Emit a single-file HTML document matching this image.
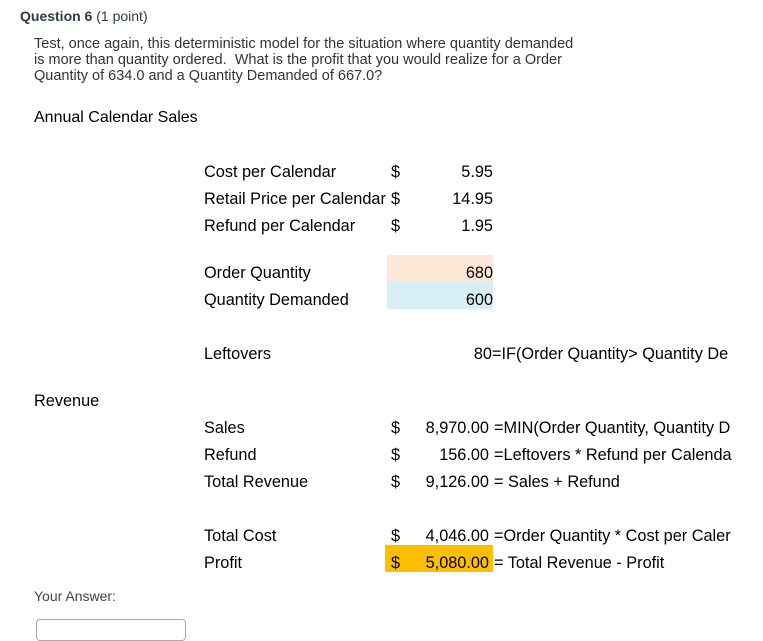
<!DOCTYPE html>
<html><head><style>
body{margin:0;width:763px;height:631px;background:#fff;position:relative;overflow:hidden;font-family:"Liberation Sans",sans-serif;}
.a{position:absolute;white-space:nowrap;line-height:18px;height:18px;font-size:16.3px;color:#000;}
.r{text-align:right;}
.q{position:absolute;font-size:14px;color:#2d3b45;white-space:nowrap;}
.bg{position:absolute;}
</style></head><body>
<div class="q" style="left:20px;top:8px;"><b>Question 6</b> (1 point)</div>
<div class="q" style="left:34px;top:36px;line-height:16px;color:#333;font-size:14.5px;">Test, once again, this deterministic model for the situation where quantity demanded<br>is more than quantity ordered.&nbsp; What is the profit that you would realize for a Order<br>Quantity of 634.0 and a Quantity Demanded of 667.0?</div>
<div class="a" style="left:34px;top:109px;font-size:16px;">Annual Calendar Sales</div>

<div class="bg" style="left:387px;top:255px;width:106px;height:27px;background:#fde7d7;"></div>
<div class="bg" style="left:387px;top:282px;width:106px;height:27px;background:#d6eef4;"></div>
<div class="bg" style="left:385px;top:545px;width:108px;height:27px;background:#fbbf00;"></div>

<div class="a" style="left:204px;top:163px;">Cost per Calendar</div>
<div class="a" style="left:391px;top:163px;">$</div>
<div class="a r" style="left:400px;width:93px;top:163px;">5.95</div>
<div class="a" style="left:204px;top:190px;">Retail Price per Calendar</div>
<div class="a" style="left:391px;top:190px;">$</div>
<div class="a r" style="left:400px;width:93px;top:190px;">14.95</div>
<div class="a" style="left:204px;top:217px;">Refund per Calendar</div>
<div class="a" style="left:391px;top:217px;">$</div>
<div class="a r" style="left:400px;width:93px;top:217px;">1.95</div>

<div class="a" style="left:204px;top:264px;">Order Quantity</div>
<div class="a r" style="left:400px;width:93px;top:264px;">680</div>
<div class="a" style="left:204px;top:291px;">Quantity Demanded</div>
<div class="a r" style="left:400px;width:93px;top:291px;">600</div>

<div class="a" style="left:204px;top:345px;">Leftovers</div>
<div class="a r" style="left:400px;width:92px;top:345px;">80</div>
<div class="a" style="left:492px;top:345px;">=IF(Order Quantity&gt; Quantity De</div>

<div class="a" style="left:34px;top:392px;">Revenue</div>

<div class="a" style="left:204px;top:419px;">Sales</div>
<div class="a" style="left:391px;top:419px;">$</div>
<div class="a r" style="left:400px;width:89px;top:419px;">8,970.00</div>
<div class="a" style="left:494px;top:419px;">=MIN(Order Quantity, Quantity D</div>
<div class="a" style="left:204px;top:446px;">Refund</div>
<div class="a" style="left:391px;top:446px;">$</div>
<div class="a r" style="left:400px;width:89px;top:446px;">156.00</div>
<div class="a" style="left:494px;top:446px;">=Leftovers * Refund per Calenda</div>
<div class="a" style="left:204px;top:473px;">Total Revenue</div>
<div class="a" style="left:391px;top:473px;">$</div>
<div class="a r" style="left:400px;width:89px;top:473px;">9,126.00</div>
<div class="a" style="left:494px;top:473px;">= Sales + Refund</div>

<div class="a" style="left:204px;top:527px;">Total Cost</div>
<div class="a" style="left:391px;top:527px;">$</div>
<div class="a r" style="left:400px;width:89px;top:527px;">4,046.00</div>
<div class="a" style="left:494px;top:527px;">=Order Quantity * Cost per Caler</div>
<div class="a" style="left:204px;top:554px;">Profit</div>
<div class="a" style="left:391px;top:554px;">$</div>
<div class="a r" style="left:400px;width:89px;top:554px;">5,080.00</div>
<div class="a" style="left:494px;top:554px;">= Total Revenue - Profit</div>

<div class="q" style="left:34px;top:588px;color:#444;">Your Answer:</div>
<div class="bg" style="left:36px;top:619px;width:148px;height:20px;border:1px solid #aaa;border-radius:4px;"></div>
</body></html>
